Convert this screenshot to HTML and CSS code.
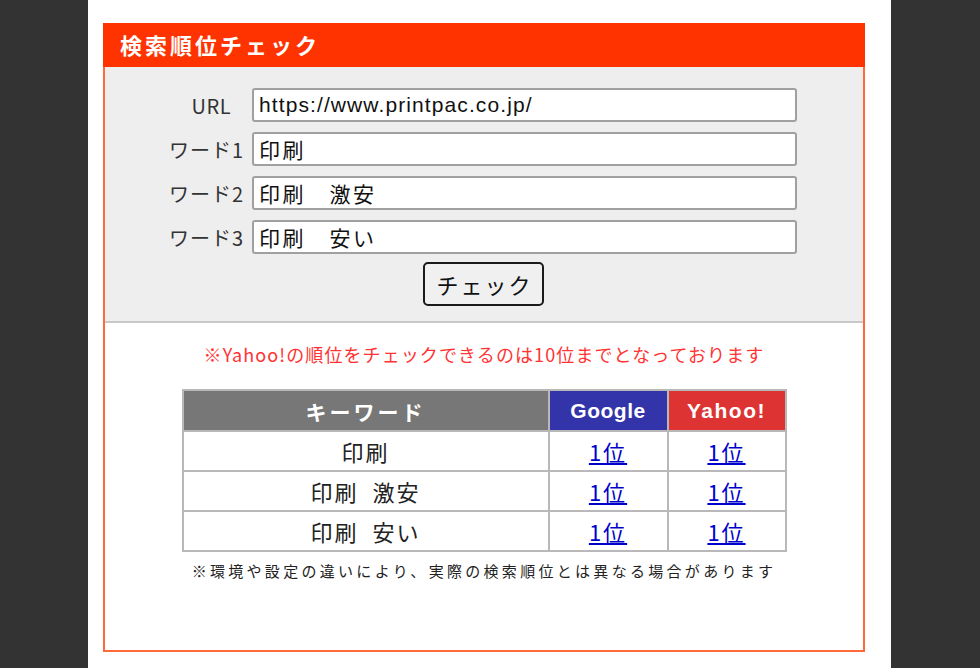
FILE: index.html
```html
<!DOCTYPE html>
<html lang="ja">
<head>
<meta charset="utf-8">
<title>検索順位チェック</title>
<link rel="stylesheet" href="styles.css">
</head>
<body>
<div class="page">
  <div class="box">
    <div class="box-head">検索順位チェック</div>
    <form class="form">
      <div class="row"><label class="lbl lbl-url">URL</label><input class="inp inp-url" type="text" value="https://www.printpac.co.jp/"></div>
      <div class="row"><label class="lbl">ワード1</label><input class="inp inp-word" type="text" value="印刷"></div>
      <div class="row"><label class="lbl">ワード2</label><input class="inp inp-word" type="text" value="印刷　激安"></div>
      <div class="row"><label class="lbl">ワード3</label><input class="inp inp-word" type="text" value="印刷　安い"></div>
      <div class="btn-row"><button class="btn" type="button">チェック</button></div>
    </form>
    <div class="result">
      <p class="note">※Yahoo!の順位をチェックできるのは10位までとなっております</p>
      <table class="rank">
        <thead>
          <tr><th class="h-kw">キーワード</th><th class="h-g">Google</th><th class="h-y">Yahoo!</th></tr>
        </thead>
        <tbody>
          <tr><td>印刷</td><td><a href="#">1位</a></td><td><a href="#">1位</a></td></tr>
          <tr><td>印刷&nbsp;&nbsp;激安</td><td><a href="#">1位</a></td><td><a href="#">1位</a></td></tr>
          <tr><td>印刷&nbsp;&nbsp;安い</td><td><a href="#">1位</a></td><td><a href="#">1位</a></td></tr>
        </tbody>
      </table>
      <p class="foot">※環境や設定の違いにより、実際の検索順位とは異なる場合があります</p>
    </div>
  </div>
</div>
</body>
</html>
```

FILE: styles.css
```css
html, body {
  margin: 0;
  padding: 0;
  background: #333333;
  height: 100%;
  overflow: hidden;
}
body {
  font-family: "Noto Sans CJK JP", "Noto Sans", "Liberation Sans", sans-serif;
}
.page {
  margin-left: 88px;
  width: 803px;
  height: 668px;
  background: #ffffff;
  padding-top: 23px;
  box-sizing: border-box;
}
.box {
  margin-left: 15px;
  width: 762px;
  height: 629px;
  box-sizing: border-box;
  border: 2px solid #ff6a3a;
  border-top: none;
  display: flex;
  flex-direction: column;
}
.box-head {
  background: #ff3300;
  color: #ffffff;
  font-weight: bold;
  font-size: 22px;
  height: 44px;
  line-height: 43px;
  padding-left: 17px;
  margin: 0 -2px;
  letter-spacing: 3px;
}
.form {
  background: #eeeeee;
  border-bottom: 2px solid #c8c8c8;
  padding: 21px 0 15px 0;
  margin: 0;
  display: flex;
  flex-direction: column;
  gap: 10px;
}
.row {
  display: flex;
  align-items: center;
  gap: 8px;
}
.lbl {
  width: 139px;
  text-align: right;
  font-size: 20px;
  color: #333333;
  letter-spacing: 1px;
}
.lbl-url {
  width: 126px;
  margin-right: 13px;
  letter-spacing: 0.5px;
}
.inp {
  width: 545px;
  height: 34px;
  box-sizing: border-box;
  border: 2px solid #a0a0a0;
  border-radius: 3px;
  background: #ffffff;
  font-size: 21px;
  color: #111111;
  padding: 0 5px;
  outline: none;
}
.inp-url {
  font-family: "Liberation Sans", "Noto Sans CJK JP", sans-serif;
  letter-spacing: 1.1px;
}
.inp-word {
  font-family: "Noto Sans CJK JP", sans-serif;
  letter-spacing: 2.5px;
}
.btn-row {
  display: flex;
  justify-content: center;
  margin-top: -2px;
}
.btn {
  margin-left: -1px;
  width: 121px;
  height: 44px;
  border: 2px solid #1a1a1a;
  border-radius: 5px;
  background: #f0f0f0;
  font-family: "Noto Sans CJK JP", sans-serif;
  font-size: 22px;
  color: #111111;
  letter-spacing: 2px;
  padding: 0 0 0 2px;
}
.result {
  display: flex;
  flex-direction: column;
  align-items: center;
  padding-top: 18px;
}
.note {
  margin: 0;
  color: #ff3333;
  font-size: 18px;
  line-height: 26px;
  letter-spacing: 1.1px;
}
.rank {
  margin-top: 22px;
  border-collapse: collapse;
  width: 605px;
  border: 2px solid #b8b8b8;
}
.rank th, .rank td {
  border: 2px solid #b8b8b8;
  text-align: center;
  padding: 0;
}
.rank th {
  height: 39px;
  color: #ffffff;
  font-weight: bold;
  font-size: 21px;
}
.rank td {
  height: 38px;
  font-size: 22px;
  color: #222222;
  letter-spacing: 2px;
  line-height: 34px;
}
.h-kw {
  background: #777777;
  width: 364px;
  letter-spacing: 3px;
}
.h-g {
  background: #3333aa;
  width: 117px;
  font-family: "Liberation Sans", sans-serif;
  font-size: 22px;
  letter-spacing: 0.5px;
}
.h-y {
  background: #dd3333;
  font-family: "Liberation Sans", sans-serif;
  font-size: 22px;
  letter-spacing: 1.5px;
}
.rank a {
  color: #0000cc;
  text-decoration: underline;
  font-size: 22px;
  letter-spacing: 2px;
}
.foot {
  margin: 8px 0 0 0;
  font-size: 15px;
  color: #222222;
  letter-spacing: 3.3px;
}
```
